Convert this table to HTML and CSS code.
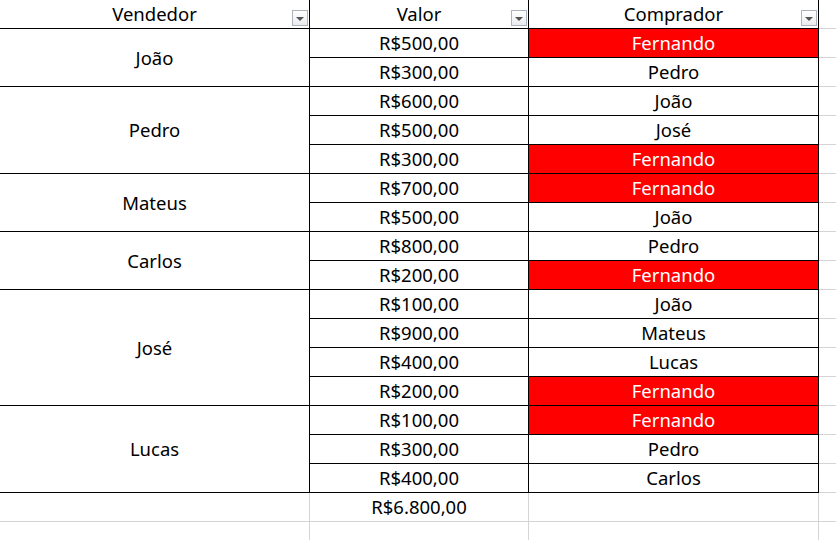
FILE: index.html
```html
<!DOCTYPE html>
<html lang="pt-BR">
<head>
<meta charset="utf-8">
<title>Vendas</title>
<link rel="stylesheet" href="styles.css">
</head>
<body>
<div class="sheet">
  <div class="c hd">Vendedor<span class="filter"><span class="tri"></span></span></div>
  <div class="c hd">Valor<span class="filter"><span class="tri"></span></span></div>
  <div class="c hd">Comprador<span class="filter"><span class="tri"></span></span></div>
  <div class="c ex"></div>

  <div class="c v s2">João</div>
  <div class="c">R$500,00</div><div class="c red">Fernando</div><div class="c ex"></div>
  <div class="c">R$300,00</div><div class="c">Pedro</div><div class="c ex"></div>

  <div class="c v s3">Pedro</div>
  <div class="c">R$600,00</div><div class="c">João</div><div class="c ex"></div>
  <div class="c">R$500,00</div><div class="c">José</div><div class="c ex"></div>
  <div class="c">R$300,00</div><div class="c red">Fernando</div><div class="c ex"></div>

  <div class="c v s2">Mateus</div>
  <div class="c">R$700,00</div><div class="c red">Fernando</div><div class="c ex"></div>
  <div class="c">R$500,00</div><div class="c">João</div><div class="c ex"></div>

  <div class="c v s2">Carlos</div>
  <div class="c">R$800,00</div><div class="c">Pedro</div><div class="c ex"></div>
  <div class="c">R$200,00</div><div class="c red">Fernando</div><div class="c ex"></div>

  <div class="c v s4">José</div>
  <div class="c">R$100,00</div><div class="c">João</div><div class="c ex"></div>
  <div class="c">R$900,00</div><div class="c">Mateus</div><div class="c ex"></div>
  <div class="c">R$400,00</div><div class="c">Lucas</div><div class="c ex"></div>
  <div class="c">R$200,00</div><div class="c red">Fernando</div><div class="c ex"></div>

  <div class="c v s3">Lucas</div>
  <div class="c">R$100,00</div><div class="c red">Fernando</div><div class="c ex"></div>
  <div class="c">R$300,00</div><div class="c">Pedro</div><div class="c ex"></div>
  <div class="c">R$400,00</div><div class="c">Carlos</div><div class="c ex"></div>

  <div class="c g"></div><div class="c g">R$6.800,00</div><div class="c g"></div><div class="c ex"></div>
  <div class="c g"></div><div class="c g"></div><div class="c g"></div><div class="c ex"></div>
</div>
</body>
</html>
```
FILE: styles.css
```css
html, body {
  margin: 0;
  padding: 0;
  background: #fff;
  overflow: hidden;
}
body {
  width: 836px;
  height: 540px;
  font-family: "Noto Sans", "Open Sans", sans-serif;
  font-size: 18.5px;
  color: #000;
}
.sheet {
  display: grid;
  grid-template-columns: 310px 219px 290px 1fr;
  grid-auto-rows: 29px;
}
.c {
  box-sizing: border-box;
  border-right: 1px solid #000;
  border-bottom: 1px solid #000;
  display: flex;
  align-items: center;
  justify-content: center;
  white-space: nowrap;
  line-height: 1;
  padding-top: 1px;
}
.hd {
  position: relative;
}
.ex {
  border-right: none;
  border-bottom: 1px solid #d4d4d4;
}
.g {
  border-right: 1px solid #d4d4d4;
  border-bottom: 1px solid #d4d4d4;
}
.red {
  background: #ff0000;
  color: #fff;
}
.s2 { grid-row: span 2; }
.s3 { grid-row: span 3; }
.s4 { grid-row: span 4; }
.filter {
  position: absolute;
  right: 1px;
  top: 10px;
  width: 16px;
  height: 16px;
  box-sizing: border-box;
  border: 1px solid #acb3bd;
  background: linear-gradient(#ffffff, #e9ebee);
  display: flex;
  align-items: center;
  justify-content: center;
}
.tri {
  width: 0;
  height: 0;
  border-left: 4px solid transparent;
  border-right: 4px solid transparent;
  border-top: 4px solid #555;
  margin-top: 1px;
}
```
